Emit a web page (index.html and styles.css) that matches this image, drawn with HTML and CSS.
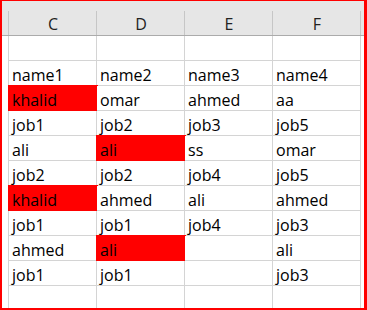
FILE: index.html
```html
<!DOCTYPE html>
<html>
<head>
<meta charset="utf-8">
<link rel="stylesheet" href="styles.css">
</head>
<body>
<div class="frame">
  <div class="sheet">
    <div class="hd stub"></div><div class="hd">C</div><div class="hd">D</div><div class="hd">E</div><div class="hd">F</div><div class="hd rest"></div>

    <div class="stub"></div><div class="c"></div><div class="c"></div><div class="c"></div><div class="c"></div><div class="rest"></div>
    <div class="stub"></div><div class="c">name1</div><div class="c">name2</div><div class="c">name3</div><div class="c">name4</div><div class="rest"></div>
    <div class="stub"></div><div class="c red">khalid</div><div class="c">omar</div><div class="c">ahmed</div><div class="c">aa</div><div class="rest"></div>
    <div class="stub"></div><div class="c">job1</div><div class="c">job2</div><div class="c">job3</div><div class="c">job5</div><div class="rest"></div>
    <div class="stub"></div><div class="c">ali</div><div class="c red">ali</div><div class="c">ss</div><div class="c">omar</div><div class="rest"></div>
    <div class="stub"></div><div class="c">job2</div><div class="c">job2</div><div class="c">job4</div><div class="c">job5</div><div class="rest"></div>
    <div class="stub"></div><div class="c red">khalid</div><div class="c">ahmed</div><div class="c">ali</div><div class="c">ahmed</div><div class="rest"></div>
    <div class="stub"></div><div class="c">job1</div><div class="c">job1</div><div class="c">job4</div><div class="c">job3</div><div class="rest"></div>
    <div class="stub"></div><div class="c">ahmed</div><div class="c red">ali</div><div class="c"></div><div class="c">ali</div><div class="rest"></div>
    <div class="stub"></div><div class="c">job1</div><div class="c">job1</div><div class="c"></div><div class="c">job3</div><div class="rest"></div>
    <div class="stub last"></div><div class="c last"></div><div class="c last"></div><div class="c last"></div><div class="c last"></div><div class="rest"></div>
  </div>
</div>
</body>
</html>
```

FILE: styles.css
```css
html, body {
  margin: 0;
  padding: 0;
  background: #fff;
}

.frame {
  width: 367px;
  height: 310px;
  box-sizing: border-box;
  border-style: solid;
  border-color: #ff0000;
  border-width: 1px 3px 2px 2px;
  overflow: hidden;
}

.sheet {
  display: grid;
  grid-template-columns: 7px repeat(4, 88px) 1fr;
  grid-template-rows: 35px repeat(10, 25px) 1fr;
  height: 100%;
  font-family: "Open Sans", "Noto Sans", sans-serif;
  font-size: 16px;
  color: #000;
}

.sheet > div {
  box-sizing: border-box;
  background: #fff;
}

.sheet > .hd {
  background: linear-gradient(#c6c6c6, #c6c6c6) right bottom / 1px 24px no-repeat, #e6e6e6;
  border-bottom: 1px solid #ababab;
  display: flex;
  align-items: flex-end;
  justify-content: center;
  line-height: 20px;
  padding-bottom: 1px;
  color: #222;
}

.sheet > .hd.rest {
  background: #e6e6e6;
}

.stub {
  border-right: 1px solid #d4d4d4;
}

.sheet > .hd.stub {
  border-right: none;
}

.c {
  border-right: 1px solid #d4d4d4;
  border-bottom: 1px solid #d4d4d4;
  display: flex;
  align-items: flex-end;
  padding-left: 3px;
  line-height: 20px;
  white-space: nowrap;
}

.c.last {
  border-bottom: none;
}

.sheet > .red {
  background: #ff0000;
  border-color: #ff0000;
  box-shadow: 0 0 0 1px #ff0000;
}
```
